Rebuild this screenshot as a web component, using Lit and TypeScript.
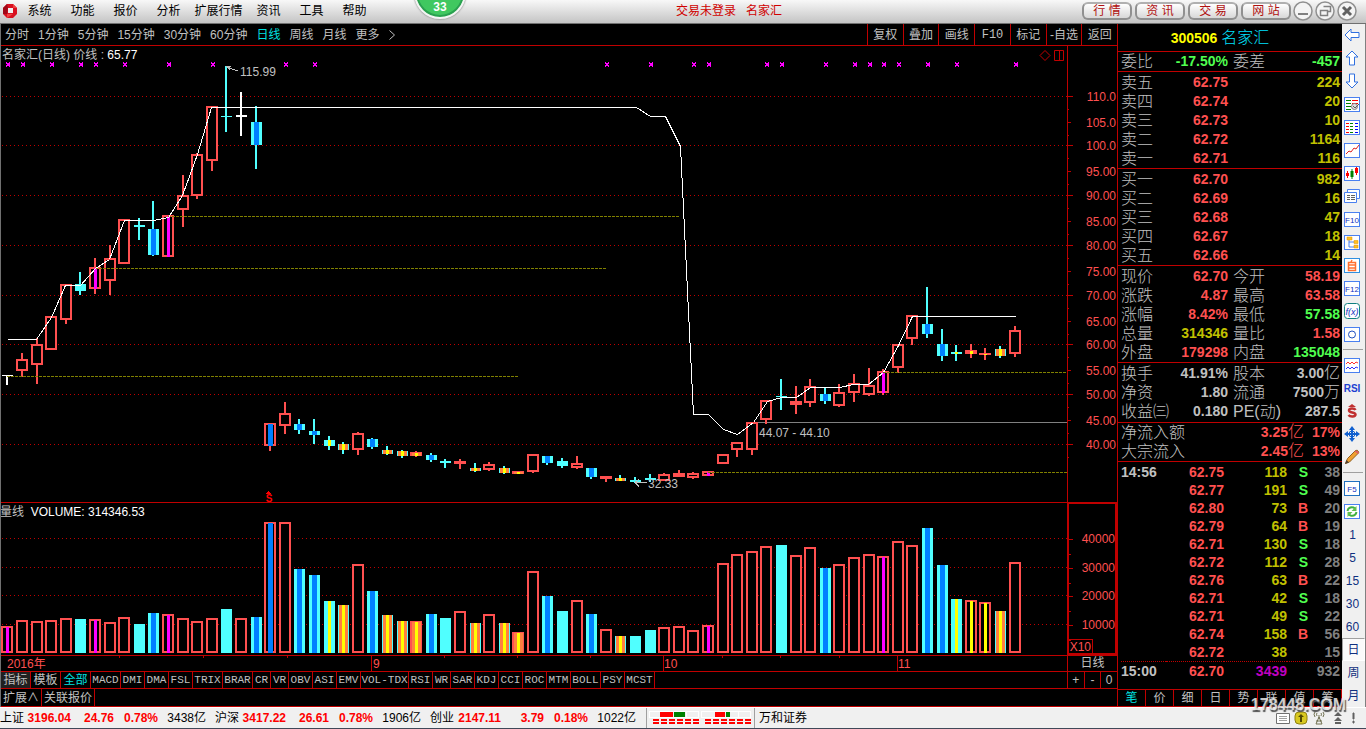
import { LitElement, html, svg, css, nothing } from "lit";
import { customElement, property, state } from "lit/decorators.js";
import { classMap } from "lit/directives/class-map.js";

/* ---------- shared look ---------- */

const base = css`
  * { box-sizing: border-box; }
  button {
    margin: 0; padding: 0; border: 0; background: none; color: inherit;
    font: inherit; white-space: nowrap; cursor: pointer;
  }
  svg { display: block; }
`;

const RED = "#ff5050";
const LINE = "#c00000";
const CYAN = "#50ffff";
const BLUE = "#0080ff";
const ORANGE = "#ff8040";
const YELLOW = "#ffff00";
const MAGENTA = "#ff00ff";
const OLIVE = "#808000";

/* ---------- chart data ----------
   kind: r up, c down, b down/blue core, y down/yellow core, o down/orange+yellow,
   m up/magenta core, R up/blue core, O up/orange+yellow, Y up/yellow core, w flat.
   Then high, body top, body bottom, low, top of the volume bar. */
type Bar = [string, number, number, number, number, number];
const BARS: Bar[] = [
  ["w", 375, 375, 376, 385, 626], ["r", 353, 359, 371, 377, 620], ["r", 338, 344, 365, 384, 621],
  ["r", 316, 316, 350, 350, 620], ["r", 284, 284, 320, 324, 618], ["c", 272, 284, 291, 295, 619],
  ["m", 258, 267, 289, 294, 619], ["r", 245, 258, 281, 295, 622], ["r", 219, 219, 264, 264, 617],
  ["c", 218, 225, 227, 240, 624], ["b", 201, 229, 255, 256, 613], ["m", 215, 215, 257, 257, 614],
  ["r", 175, 195, 210, 227, 618], ["r", 153, 154, 196, 199, 621], ["r", 106, 106, 161, 171, 618],
  ["c", 66, 116, 117, 132, 609], ["w", 92, 115, 117, 136, 618], ["b", 106, 122, 145, 169, 617],
  ["R", 423, 423, 446, 451, 522], ["r", 402, 413, 426, 434, 522], ["b", 419, 424, 430, 434, 569],
  ["b", 419, 431, 435, 444, 575], ["y", 436, 440, 446, 450, 601], ["o", 442, 444, 450, 454, 605],
  ["r", 432, 433, 450, 455, 564], ["b", 438, 439, 447, 449, 591], ["o", 446, 450, 454, 455, 615],
  ["o", 450, 451, 456, 458, 621], ["O", 451, 452, 456, 457, 621], ["b", 453, 455, 460, 462, 614],
  ["c", 459, 461, 463, 468, 618], ["r", 459, 461, 464, 469, 611], ["o", 463, 468, 471, 472, 623],
  ["r", 462, 464, 470, 471, 614], ["o", 466, 468, 473, 474, 623], ["O", 471, 471, 474, 474, 632],
  ["r", 454, 454, 472, 473, 571], ["b", 456, 456, 463, 465, 596], ["c", 458, 461, 466, 468, 611],
  ["r", 456, 463, 468, 469, 600], ["b", 468, 468, 477, 479, 614], ["r", 476, 476, 479, 482, 629],
  ["o", 475, 478, 481, 481, 636], ["c", 477, 480, 482, 483, 636], ["c", 474, 478, 480, 482, 630],
  ["r", 473, 474, 481, 481, 627], ["r", 470, 473, 477, 477, 626], ["r", 472, 473, 478, 479, 630],
  ["m", 471, 471, 476, 476, 625], ["r", 454, 454, 464, 464, 563], ["r", 442, 442, 450, 457, 554],
  ["r", 422, 422, 450, 455, 551], ["r", 400, 400, 420, 424, 546], ["c", 379, 396, 397, 410, 545],
  ["r", 386, 401, 405, 414, 555], ["r", 379, 386, 403, 407, 547], ["b", 388, 394, 401, 404, 568],
  ["r", 384, 392, 406, 407, 564], ["r", 374, 383, 393, 402, 557], ["r", 368, 385, 395, 396, 554],
  ["m", 369, 371, 393, 395, 556], ["r", 344, 344, 368, 373, 541], ["r", 315, 315, 339, 345, 545],
  ["b", 287, 324, 334, 338, 528], ["b", 329, 344, 356, 361, 565], ["y", 345, 352, 354, 361, 599],
  ["Y", 344, 350, 354, 358, 600], ["Y", 348, 353, 355, 360, 602], ["o", 346, 349, 356, 358, 611],
  ["r", 326, 330, 354, 357, 562],
];
const slot = (i: number) => Math.round(7.3 + 14.6 * i);

const PRICE_LINE: [number, number][] = [
  [7, 339], [36, 339], [51, 317], [65, 285], [80, 285], [95, 268], [109, 259], [124, 220], [153, 220],
  [168, 217], [182, 195], [197, 154], [211, 107], [636, 107], [650, 116], [665, 116], [680, 146],
  [693, 414], [708, 414], [723, 429], [737, 434], [753, 422], [767, 401], [781, 397], [796, 397],
  [810, 387], [839, 387], [853, 384], [868, 384], [883, 372], [898, 345], [912, 316], [1015, 316],
];
const MARKS: [number, boolean][] = [
  [0, true], [1, true], [3, true], [5, true], [6, false], [8, false], [11, true], [14, false],
  [19, false], [21, false], [41, false], [44, true], [47, false], [48, true], [52, true], [53, true],
  [56, false], [58, true], [59, true], [60, true], [61, false], [63, true], [65, false], [69, true],
];
const SUPPORTS: [number, number | string, number][] = [
  [168, 680, 216], [95, 607, 268], [7, 519, 376], [883, "100%", 372], [708, "100%", 472],
];
const PRICE_TICKS: [string, number][] = [
  ["110.0", 96], ["105.0", 122], ["100.0", 145], ["95.00", 171], ["90.00", 195], ["85.00", 221],
  ["80.00", 245], ["75.00", 271], ["70.00", 295], ["65.00", 321], ["60.00", 344], ["55.00", 370],
  ["50.00", 394], ["45.00", 420], ["40.00", 444],
];
const VOLUME_TICKS: [string, number][] = [["40000", 538], ["30000", 567], ["20000", 595], ["10000", 624]];

const PRICE_TOP = 46;
const VOLUME_TOP = 503;
const FLOOR = 653;

const box = (x: number, y: number, w: number, h: number, fill: string) =>
  svg`<rect x=${x} y=${y} width=${w} height=${Math.max(h, 1)} fill=${fill}></rect>`;

/* The body of a candle or of a volume bar, centred on x. */
function body(kind: string, x: number, top: number, bottom: number) {
  const h = bottom - top;
  if (kind === "w") return box(x - 5, top, 11, h, "#ffffff");
  if ("cbyo".includes(kind)) {
    return svg`${box(x - 5, top, 11, h, CYAN)}
      ${kind === "b" ? box(x - 2, top, 5, h, BLUE) : nothing}
      ${kind === "o" ? box(x - 4, top, 9, h, ORANGE) : nothing}
      ${kind === "o" || kind === "y" ? box(x - 1, top, 3, h, YELLOW) : nothing}`;
  }
  const frame = h <= 4
    ? box(x - 6, top, 12, h, RED)
    : svg`<rect x=${x - 5} y=${top + 1} width="10" height=${h - 2} fill="#000000" stroke=${RED} stroke-width="2"></rect>`;
  return svg`${frame}
    ${kind === "O" ? box(x - 4, top + 1, 9, h - 1, ORANGE) : nothing}
    ${kind === "O" || kind === "Y" ? box(x - 1, top + 1, 3, h - 1, YELLOW) : nothing}
    ${kind === "m" ? box(x - 1, top + 1, 3, h - 1, MAGENTA) : nothing}
    ${kind === "R" ? box(x - 2, top + 1, 5, h - 1, BLUE) : nothing}`;
}

@customElement("kline-chart")
class KlineChart extends LitElement {
  static styles = [base, css`
    :host { display: flex; flex-direction: column; flex: 1; min-height: 0; }
    .pane { display: flex; position: relative; min-height: 0; }
    .price { flex: 1; border-bottom: 1px solid #c00000; }
    .volume { height: 153px; border-bottom: 1px solid #c00000; }
    .plot { flex: 1; min-width: 0; height: 100%; shape-rendering: crispEdges; }
    .axis { width: 50px; height: 100%; border-left: 1px solid #c00000; shape-rendering: crispEdges; }
    .volume .axis { border: 2px solid #c00000; border-top-width: 1px; }
    text { font-size: 12px; fill: #c0c0c0; }
    .tick { fill: #ff5050; text-anchor: end; }
    .date { fill: #ff5050; }
    .money { fill: #ff0000; font-size: 10px; font-weight: 700; text-anchor: middle; }
    .legend { position: absolute; left: 2px; top: 0; line-height: 18px; color: #c0c0c0; white-space: pre; }
    .volume .legend { left: 0; color: #ffffff; }
    .legend b { font-weight: 400; color: #ffffff; }
    .legend i { font-style: normal; color: #c0c0c0; }
    .tools { position: absolute; right: 52px; top: 4px; }
    .time { display: flex; height: 16px; border-bottom: 1px solid #c00000; }
    .time .plot, .time .unit { height: 15px; }
    .unit { width: 50px; border-left: 1px solid #c00000; color: #c0c0c0; text-align: center; line-height: 15px; }
  `];

  private pricePlot() {
    const points = PRICE_LINE.map(([x, y]) => `${x + 0.5},${y + 0.5}`).join(" ");
    return html`<svg class="plot">
      <g transform="translate(0 ${-PRICE_TOP})">
        ${PRICE_TICKS.filter((_, i) => i % 2 === 0).map(([, y]) => svg`
          <line x1="2" x2="100%" y1=${y + 0.5} y2=${y + 0.5} stroke=${LINE} stroke-dasharray="1 3"></line>`)}
        <line x1="750" x2="100%" y1="422.5" y2="422.5" stroke="#808080"></line>
        ${BARS.map(([kind, high, top, bottom, low], i) => {
          const x = slot(i);
          const ink = kind === "w" ? "#ffffff" : "cbyo".includes(kind) ? CYAN : RED;
          return svg`${box(x - 1, high, 2, low - high, ink)}${body(kind, x, top, bottom)}`;
        })}
        ${SUPPORTS.map(([a, b, y]) => svg`
          <line x1=${a} x2=${b} y1=${y + 0.5} y2=${y + 0.5} stroke=${OLIVE} stroke-dasharray="3 1"></line>`)}
        <polyline points=${points} fill="none" stroke="#ffffff"></polyline>
        ${MARKS.map(([i, strong]) => {
          const x = slot(i) + 1;
          return svg`<path d="M${x - 2} 62.5L${x + 2} 66.5M${x + 2} 62.5L${x - 2} 66.5" stroke=${MAGENTA}></path>
            ${strong ? box(x - 1, 63, 3, 3, MAGENTA) : nothing}`;
        })}
        <path d="M226.5 66.5h4M226.5 66.5l4 4M228 67.5l10 3.5" stroke="#c0c0c0" fill="none"></path>
        <text x="240" y="76">115.99</text>
        <text x="759" y="437">44.07 - 44.10</text>
        <path d="M635 482.5h12M635 482.5l4-3M635 482.5l4 4" stroke="#c0c0c0" fill="none"></path>
        <text x="648" y="488">32.33</text>
        <path d="M266 493.5h5M267 492.5h3M268 491.5h1" stroke="#ff0000"></path>
        <text class="money" x="269" y="502">S</text>
      </g>
    </svg>`;
  }

  render() {
    return html`
      <div class="pane price">
        ${this.pricePlot()}
        <svg class="axis">
          ${PRICE_TICKS.map(([label, y], i) => svg`
            <line x1="0" x2=${i % 2 ? 3 : 5} y1=${y - PRICE_TOP + 0.5} y2=${y - PRICE_TOP + 0.5} stroke=${LINE}></line>
            <line x1="0" x2="1" y1=${y - PRICE_TOP + 13} y2=${y - PRICE_TOP + 13} stroke=${LINE}></line>
            <text class="tick" x="48" y=${y - PRICE_TOP + 5}>${label}</text>`)}
        </svg>
        <div class="legend">名家汇(日线) 价线 : <b>65.77</b></div>
        <svg class="tools" width="26" height="12">
          <path d="M6 .5l5 5-5 5-5-5z" fill="none" stroke=${LINE}></path>
          <path d="M15.5 .5h9v10h-9zM20.5 .5v10" fill="none" stroke=${LINE}></path>
        </svg>
      </div>
      <div class="pane volume">
        <svg class="plot">
          <g transform="translate(0 ${-VOLUME_TOP})">
            ${VOLUME_TICKS.map(([, y]) => svg`
              <line x1="2" x2="100%" y1=${y + 0.5} y2=${y + 0.5} stroke=${LINE} stroke-dasharray="1 3"></line>`)}
            ${BARS.map(([kind, , , , , top], i) =>
              body(i === 0 ? "m" : kind === "w" ? "r" : kind, slot(i), top, FLOOR))}
          </g>
        </svg>
        <svg class="axis">
          ${VOLUME_TICKS.map(([label, y]) => svg`
            <line x1="0" x2="4" y1=${y - VOLUME_TOP + 0.5} y2=${y - VOLUME_TOP + 0.5} stroke=${LINE}></line>
            <line x1="0" x2="2" y1=${y - VOLUME_TOP + 15} y2=${y - VOLUME_TOP + 15} stroke=${LINE}></line>
            <text class="tick" x="46" y=${y - VOLUME_TOP + 4}>${label}</text>`)}
          <path d="M0 135.5h23.5v16" fill="none" stroke=${LINE}></path>
          <text class="tick" x="22" y="147">X10</text>
        </svg>
        <div class="legend"><i>量线</i>  VOLUME: 314346.53</div>
      </div>
      <div class="time">
        <svg class="plot">
          ${[119, 203, 287, 444, 517, 590, 722, 780, 839].map((x) => box(x, 0, 1, 2, LINE))}
          ${[371, 663, 897].map((x) => box(x, 0, 1, 15, LINE))}
          <text class="date" x="7" y="12">2016年</text>
          <text class="date" x="373" y="12">9</text>
          <text class="date" x="664" y="12">10</text>
          <text class="date" x="898" y="12">11</text>
        </svg>
        <div class="unit">日线</div>
      </div>`;
  }
}

/* ---------- quote panel ---------- */

type Tone = "up" | "down" | "vol" | "plain";
type Cell = [string, string, Tone];
const GROUPS: { rows: [Cell, Cell][]; cls: string }[] = [
  { cls: "tight", rows: [[["委比", "-17.50%", "down"], ["委差", "-457", "down"]]] },
  { cls: "", rows: [
    [["卖五", "62.75", "up"], ["", "224", "vol"]], [["卖四", "62.74", "up"], ["", "20", "vol"]],
    [["卖三", "62.73", "up"], ["", "10", "vol"]], [["卖二", "62.72", "up"], ["", "1164", "vol"]],
    [["卖一", "62.71", "up"], ["", "116", "vol"]]] },
  { cls: "", rows: [
    [["买一", "62.70", "up"], ["", "982", "vol"]], [["买二", "62.69", "up"], ["", "16", "vol"]],
    [["买三", "62.68", "up"], ["", "47", "vol"]], [["买四", "62.67", "up"], ["", "18", "vol"]],
    [["买五", "62.66", "up"], ["", "14", "vol"]]] },
  { cls: "", rows: [
    [["现价", "62.70", "up"], ["今开", "58.19", "up"]], [["涨跌", "4.87", "up"], ["最高", "63.58", "up"]],
    [["涨幅", "8.42%", "up"], ["最低", "57.58", "down"]], [["总量", "314346", "vol"], ["量比", "1.58", "up"]],
    [["外盘", "179298", "up"], ["内盘", "135048", "down"]]] },
  { cls: "loose", rows: [
    [["换手", "41.91%", "plain"], ["股本", "3.00亿", "plain"]], [["净资", "1.80", "plain"], ["流通", "7500万", "plain"]],
    [["收益㈢", "0.180", "plain"], ["PE(动)", "287.5", "plain"]]] },
];
const FLOWS = [["净流入额", "3.25亿", "17%"], ["大宗流入", "2.45亿", "13%"]];
const TRADES: [string, string, string, string, string][] = [
  ["14:56", "62.75", "118", "S", "38"], ["", "62.77", "191", "S", "49"], ["", "62.80", "73", "B", "20"],
  ["", "62.79", "64", "B", "19"], ["", "62.71", "130", "S", "18"], ["", "62.72", "112", "S", "28"],
  ["", "62.76", "63", "B", "22"], ["", "62.71", "42", "S", "18"], ["", "62.71", "49", "S", "22"],
  ["", "62.74", "158", "B", "56"], ["", "62.72", "38", "", "15"], ["15:00", "62.70", "3439", "", "932"],
];

const amount = (v: string) => {
  const m = /^(.*?)([亿万])$/.exec(v);
  return m ? html`${m[1]}<span class="suffix">${m[2]}</span>` : v;
};

@customElement("quote-panel")
class QuotePanel extends LitElement {
  @state() private tab = 0;

  static styles = [base, css`
    :host { display: flex; flex-direction: column; width: 225px; border-left: 1px solid #c00000; color: #c0c0c0; }
    .head { height: 28px; line-height: 27px; text-align: center; border-bottom: 1px solid #c00000; padding-right: 20px; }
    .code { color: #ffff00; font-size: 14px; font-weight: 700; margin-right: 4px; }
    .name { color: #00e0ff; font-size: 16px; font-weight: 300; }
    .group { border-bottom: 1px solid #c00000; padding: 1px 2px 0 3px; }
    .tight { padding-top: 0; }
    .loose { padding-bottom: 1px; }
    table { width: 100%; border-collapse: collapse; table-layout: fixed; }
    th, td { padding: 0; height: 19px; line-height: 19px; white-space: nowrap; vertical-align: middle; }
    th { font-size: 16px; font-weight: 300; text-align: left; }
    td { font-size: 14px; font-weight: 700; text-align: right; }
    .label { width: 50px; }
    .value { width: 57px; }
    .second { width: 48px; }
    .gap { width: 5px; }
    .flow { width: 85px; }
    .percent { width: 36px; }
    .suffix { font-size: 16px; font-weight: 300; line-height: 1; }
    .up { color: #ff5050; }
    .down { color: #50ff50; }
    .vol { color: #c0c000; }
    .dim { color: #808080; }
    .big { color: #c000c0; }
    .trades { flex: 1; padding: 1px 2px 0 3px; }
    .trades td { height: 18px; line-height: 18px; }
    .trades .when { text-align: left; width: 45px; }
    .trades .cost { width: 58px; }
    .trades .lots { width: 63px; }
    .trades .side { width: 21px; }
    .trades .last td { border-top: 1px dotted #c00000; }
    .tabs { display: flex; height: 18px; border: 1px solid #c00000; border-left: 0; }
    .tabs button { flex: 1; font-size: 12px; border-left: 1px solid #c00000; }
    .tabs button:first-child { border-left: 0; }
    .tabs .on { color: #00e0e0; }
  `];

  render() {
    return html`
      <div class="head"><span class="code">300506</span><span class="name">名家汇</span></div>
      ${GROUPS.map((g) => html`<div class="group ${g.cls}"><table>
        <colgroup><col class="label"><col class="value"><col class="gap"><col class="second"><col></colgroup>
        ${g.rows.map(([a, b]) => html`<tr>
          <th scope="row">${a[0]}</th><td class=${a[2]}>${a[1]}</td><td></td>
          <th>${b[0]}</th><td class=${b[2]}>${amount(b[1])}</td></tr>`)}
      </table></div>`)}
      <div class="group tight"><table>
        <colgroup><col><col class="flow"><col class="percent"></colgroup>
        ${FLOWS.map(([n, v, p]) => html`<tr><th scope="row">${n}</th><td class="up">${amount(v)}</td><td class="up">${p}</td></tr>`)}
      </table></div>
      <div class="trades"><table>
        ${TRADES.map(([t, p, v, s, n], i) => html`<tr class=${classMap({ last: i === TRADES.length - 1 })}>
          <td class="when">${t}</td><td class="cost up">${p}</td>
          <td class="lots ${v === "3439" ? "big" : "vol"}">${v}</td>
          <td class="side ${s === "B" ? "up" : "down"}">${s}</td><td class="dim">${n}</td></tr>`)}
      </table></div>
      <div class="tabs">${[..."笔价细日势联值筹"].map((t, i) => html`
        <button class=${classMap({ on: i === this.tab })} @click=${() => (this.tab = i)}>${t}</button>`)}</div>`;
  }
}

/* ---------- tool rail ---------- */

const frame = (inner: unknown, ink = "#4a80f0", w = 15, h = 14) =>
  svg`<rect x=".5" y="1.5" width=${w} height=${h} fill="#ffffff" stroke=${ink}></rect>${inner}`;
const rows = (x: number, ink: string, n = 4, w = 3) =>
  Array.from({ length: n }, (_, i) => svg`<rect x=${x} y=${4 + i * 3} width=${w} height="1" fill=${ink}></rect>`);
const glyph = (t: string) => svg`<text x="8" y="12">${t}</text>`;
const arrow = svg`<path d="M1 8l6-6v3.5h8v5H7V14z" fill="#ffffff" stroke="#3070e0"></path>`;

const RAIL: Record<string, unknown> = {
  "后退": arrow,
  "上移": svg`<g transform="rotate(90 8 8)">${arrow}</g>`,
  "下移": svg`<g transform="rotate(-90 8 8)">${arrow}</g>`,
  "报价表": frame(svg`${rows(2, "#008000", 4, 5)}${rows(8, "#ff0000", 2, 6)}<circle cx="10.5" cy="10.5" r="3" fill="#e0e0e0" stroke="#808080"></circle><path d="M9 10l2 2 4-4" stroke="#606060" fill="none"></path>`),
  "多列": frame(svg`${rows(2, "#ff0000")}${rows(6, "#008000")}${rows(11, "#0000ff")}`),
  "走势": frame(svg`<path d="M2 12l3-3 2 1 3-4 2 1 3-4" stroke="#e02020" fill="none"></path>`),
  "K线": frame(svg`<path d="M3.5 6v7M12.5 2v8" stroke="#ff0000"></path><path d="M8 4v10" stroke="#008000"></path><path d="M2 8h3v3H2zM11 3h3v5h-3z" fill="#ff0000"></path><path d="M6.5 6h3v6h-3z" fill="#008000"></path>`),
  "资料": svg`<path d="M3.5 1.5h12v9h-12z" fill="#ffffff" stroke="#4a80f0"></path><path d="M.5 4.5h12v10H.5z" fill="#ffffff" stroke="#4a80f0"></path><path d="M3 7.5h3m1 0h4M3 9.5h3m1 0h4M3 11.5h3m1 0h4" stroke="#606060"></path>`,
  "F10": frame(glyph("F10")),
  "板块树": frame(svg`<path d="M5 5v8h5M5 8h5" stroke="#4a80f0" fill="none"></path><path d="M3 3h5v3H3zM10 6.5h4v3h-4zM10 11h4v3h-4z" fill="#ffc020" stroke="#e09000" stroke-width=".5"></path>`),
  "自选": frame(svg`<path d="M4.5 5.5h7v8h-7zM4.500 8h7M4.500 11h7M8 3l-1 2" stroke="#ff7030" stroke-width="1.5" fill="none"></path>`, "#3090e0"),
  "F12": frame(glyph("F12")),
  "公式": svg`<rect x=".5" y=".5" width="15" height="15" rx="3" fill="#ffffff" stroke="#108080"></rect><text class="formula" x="8" y="12">f(x)</text>`,
  "区间": frame(svg`<circle cx="8" cy="8.5" r="3.5" fill="none" stroke="#2050c0"></circle>`),
  "-1": null,
  "叠加": frame(svg`<path d="M2 7l2-2 2 2 2-2 2 2 2-2 2 1" stroke="#ff3030" fill="none"></path><path d="M2 12l2-2 2 2 2-2 2 2 2-2 2 1" stroke="#3030ff" fill="none"></path>`),
  "RSI": svg`<text class="rsi" x="8" y="12">RSI</text>`,
  "资金": svg`<path d="M8 1l4 3H4z" fill="#c03030"></path><path d="M11.500 7c-1-2-6.500-2-6.500.5 0 2.500 6.500 1.500 6.500 4 0 2.500-5.500 2.500-7 .5" stroke="#c03030" stroke-width="2.500" fill="none"></path>`,
  "平移": svg`<path d="M8 0l3 4H9v3h3V5l4 3-4 3V9H9v3h2l-3 4-3-4h2V9H4v2L0 8l4-3v2h3V4H5z" fill="#1060d0"></path><circle cx="8" cy="8" r="3" fill="none" stroke="#1060d0"></circle>`,
  "画笔": svg`<path d="M1.5 14.5l2-5 8-8q2-1 3 1 .8 1-1 2.5l-8 8z" fill="#f0a030" stroke="#906020"></path><path d="M1 15l1.5-4 2.5 2.5z" fill="#504030"></path><path d="M11 2q3-1 4 2l-1 1-4-3z" fill="#e06060"></path>`,
  "-2": null,
  "F5": frame(glyph("F5"), "#2070c0"),
  "刷新": frame(svg`<path d="M3.5 8q1-4.5 6-3.5l2 1.5M12.5 9q-1 4.5-6 3.5l-2-1.5" stroke="#40b040" stroke-width="2" fill="none"></path><path d="M12.5 3v5h-5zM3.5 14v-5h5z" fill="#60c050"></path>`),
};

@customElement("tool-rail")
class ToolRail extends LitElement {
  @state() private period = "日";

  static styles = [base, css`
    :host { display: flex; flex-direction: column; width: 24px; background: #f0f0f0; border-right: 1px solid #808080; }
    button { display: flex; height: 23px; align-items: center; justify-content: center; padding-right: 2px; color: #103080; font-size: 12px; }
    svg { width: 17px; height: 17px; overflow: visible; }
    text { font-size: 8px; fill: #1030c0; text-anchor: middle; }
    .formula { font-size: 9px; font-style: italic; }
    .rsi { font-size: 10px; font-weight: 700; fill: #2040d0; }
    hr { width: 20px; height: 8px; margin: 0 0 0 1px; border: 0; background: linear-gradient(#a0a0a0, #a0a0a0) 0 3px / 100% 1px no-repeat; }
    .word { font-size: 12px; padding: 0; }
    .on { background: #fafafa; border: 1px solid #a0a0a0; border-right-color: #ffffff; border-bottom-color: #ffffff; }
  `];

  render() {
    return html`
      ${Object.entries(RAIL).map(([name, art]) => art === null ? html`<hr>` : html`
        <button aria-label=${name}><svg viewBox="0 0 17 17">${art}</svg></button>`)}
      ${["1", "5", "15", "30", "60"].map((p) => html`<button @click=${() => (this.period = p)}>${p}</button>`)}
      ${["日", "周", "月"].map((p) => html`
        <button class="word ${p === this.period ? "on" : ""}" @click=${() => (this.period = p)}>${p}</button>`)}`;
  }
}

/* ---------- status bar ---------- */

const INDICES = [
  ["上证", "3196.04", "24.76", "0.78%", "3438亿"],
  ["沪深", "3417.22", "26.61", "0.78%", "1906亿"],
  ["创业", "2147.11", "3.79", "0.18%", "1022亿"],
];

@customElement("status-bar")
class StatusBar extends LitElement {
  static styles = [base, css`
    :host { display: flex; align-items: center; height: 22px; background: #f0f0f0; border-top: 1px solid #ffffff; border-bottom: 1px solid #404858; color: #000000; line-height: 20px; }
    .index { display: grid; grid-template-columns: 24px 47px 43px 44px 48px; width: 215px; text-align: right; white-space: nowrap; }
    .index b { color: #ff0000; }
    .meters { display: flex; gap: 2px; padding: 0 3px 0 2px; margin-left: 1px; border-left: 1px solid #a0a0a0; border-right: 1px solid #a0a0a0; }
    .broker { padding-left: 4px; flex: 1; }
    .tray { display: flex; gap: 4px; padding-right: 8px; }
  `];

  private meter(red: [number, number], green: [number, number]) {
    return html`<svg width="50" height="20" shape-rendering="crispEdges">
      <rect x=".5" y="3.5" width="49" height="6" fill="#f0f0f0" stroke="#ffffff"></rect>
      ${box(red[0], 4, red[1], 5, "#ff0000")}${box(green[0], 4, green[1], 5, "#008000")}
      ${box(37, 4, 1, 5, "#ffffff")}
      <path d="M4 12h46M4 15h46" stroke="#ff0000" stroke-width="2" stroke-dasharray="6 2"></path>
    </svg>`;
  }

  render() {
    return html`
      ${INDICES.map(([n, v, d, p, a]) => html`<div class="index">
        <span>${n}</span><b>${v}</b><b>${d}</b><b>${p}</b><span>${a}</span></div>`)}
      <div class="meters">${this.meter([11, 13], [25, 11])}${this.meter([14, 10], [25, 4])}</div>
      <div class="broker">万和证券</div>
      <div class="tray">
        <svg width="14" height="14"><path d="M.5 2.5h13v10H.5z" fill="#ffffff" stroke="#707070"></path><path d="M3 5.5h8M3 7.5h8M3 9.5h8" stroke="#a0a0a0"></path></svg>
        <svg width="14" height="14"><rect x="1" y="1" width="12" height="12" rx="4" fill="#d8c820" stroke="#908010"></rect><path d="M7 3l3 3H8v5H6V6H4z" fill="#504800"></path></svg>
        <svg width="14" height="14"><path d="M7 4v4M7 6l-3 7h6zM4 10h6M3 1q-2 2 0 5M11 1q2 2 0 5M5 2q-1 1 0 3M9 2q1 1 0 3" fill="none" stroke="#707050"></path></svg>
        <svg width="14" height="14"><path d="M8 1l4 4H4zM8 6l4 4H4zM5 11h6v2H5z" fill="#606060"></path></svg>
        <svg width="10" height="14"><path d="M5 2h1v6H5zM5 10h1v2H5z" stroke="#606060" fill="#606060"></path></svg>
      </div>`;
  }
}

/* ---------- application frame ---------- */

const PERIODS = ["分时", "1分钟", "5分钟", "15分钟", "30分钟", "60分钟", "日线", "周线", "月线", "更多"];
const MENUS = ["系统", "功能", "报价", "分析", "扩展行情", "资讯", "工具", "帮助"];
const ACTIONS = ["复权", "叠加", "画线", "F10", "标记", "-自选", "返回"];
const INDICATORS = ["MACD", "DMI", "DMA", "FSL", "TRIX", "BRAR", "CR", "VR", "OBV", "ASI", "EMV", "VOL-TDX",
  "RSI", "WR", "SAR", "KDJ", "CCI", "ROC", "MTM", "BOLL", "PSY", "MCST"];

@customElement("app-root")
class AppRoot extends LitElement {
  @property() period = "日线";

  static styles = [base, css`
    :host {
      display: flex; flex-direction: column; position: relative; height: 100vh; overflow: hidden;
      background: #000000; font: 12px/1 "Liberation Sans", "Noto Sans CJK SC", sans-serif;
    }
    .top { display: flex; align-items: center; height: 24px; padding: 0 9px 1px 2px; background: linear-gradient(#f8f8f8, #c4c4c4); border-bottom: 1px solid #707070; }
    .menu { display: flex; }
    .menu button { width: 43px; height: 22px; color: #000000; }
    .menu .wide { width: 57px; }
    .title { flex: 1; text-align: center; color: #d00000; white-space: pre; }
    .links { display: flex; gap: 3px; margin-right: 2px; }
    .links button { width: 50px; height: 18px; border: 2px solid #909090; border-top-color: #b0b0b0; border-radius: 6px; background: linear-gradient(#ffffff, #d8d8d8); color: #b01010; line-height: 14px; }
    .window { display: flex; gap: 2px; }
    .badge {
      position: absolute; left: 414px; top: -33px; width: 52px; height: 52px; border-radius: 50%;
      border: 2px solid #f4f4f4; background: #40c860; box-shadow: inset 0 0 0 2px #2aa050, 0 0 2px #606060;
      color: #ffffff; font-weight: 700; font-size: 12px; text-align: center; line-height: 76px;
    }
    .main { display: flex; flex: 1; min-height: 0; position: relative; }
    .main::before { content: ""; position: absolute; left: 0; top: 0; bottom: 0; width: 1px; background: #707070; z-index: 1; }
    .work { display: flex; flex-direction: column; flex: 1; min-width: 0; }
    .bar { display: flex; height: 22px; border-bottom: 1px solid #c00000; color: #c0c0c0; }
    .periods { display: flex; gap: 9px; flex: 1; padding-left: 5px; align-items: center; }
    .periods .on { color: #00e0e0; }
    .actions { display: flex; width: 250px; }
    .actions button { flex: 1; border-left: 1px solid #c00000; }
    .actions .latin { font-family: "Liberation Mono", monospace; }
    .strip { display: flex; height: 17px; border-bottom: 1px solid #c00000; color: #c0c0c0; padding-left: 1px; }
    .strip.second { height: 18px; }
    .strip button { border-right: 1px solid #c00000; padding: 0 2px; }
    .strip .tab { width: 30px; }
    .strip .tab:first-child { background: #202020; }
    .strip .on { color: #00e0e0; }
    .strip .code { font: 11px/1 "Liberation Mono", monospace; padding: 0; }
    .c2 { width: 18px; } .c3 { width: 24px; } .c4 { width: 30px; } .c7 { width: 48px; }
    .zoom { display: flex; margin-left: auto; width: 50px; border-left: 1px solid #c00000; }
    .zoom button { flex: 1; }
    .zoom button:last-child { border-right: 0; }
    .mark {
      position: absolute; right: 20px; bottom: 14px; font-size: 16px; line-height: 20px; font-weight: 700;
      color: rgba(235, 235, 235, 0.85); text-shadow: 1px 2px 1px #505050; pointer-events: none;
    }
  `];

  render() {
    return html`
      <header class="top">
        <svg width="16" height="16" viewBox="0 0 16 16">
          <path d="M5 1h6l4 4v6l-4 4H5l-4-4V5z" fill="#d81020"></path>
          <path d="M1 5l4-4 1 4-1 6H1z" fill="#a00818"></path>
          <path d="M6 5h5v5H6z" fill="#f0f0f0"></path>
          <path d="M11 1l4 4h-4zM5 15v-4h6z" fill="#f04040"></path>
        </svg>
        <nav class="menu">${MENUS.map((m) => html`<button class=${classMap({ wide: m.length > 2 })}>${m}</button>`)}</nav>
        <div class="title">交易未登录   名家汇</div>
        <div class="links">${["行 情", "资 讯", "交 易", "网 站"].map((t) => html`<button>${t}</button>`)}</div>
        <div class="window">${[
          svg`<path d="M5 13h10" stroke="#808080" stroke-width="2"></path>`,
          svg`<path d="M8.5 5.5h7v5h-3M5.5 9.5h7v5h-7z" stroke="#808080" stroke-width="1.5" fill="none"></path>`,
          svg`<path d="M6 6l8 8M14 6l-8 8" stroke="#606060" stroke-width="3"></path>`,
        ].map((art, i) => html`<button aria-label=${["最小化", "还原", "关闭"][i]}><svg width="20" height="20">
          <circle cx="10" cy="10" r="9" fill="#f4f4f4" stroke="#909090" stroke-width="1.5"></circle>${art}</svg></button>`)}
        </div>
      </header>
      <div class="badge">33</div>
      <div class="main">
        <div class="work">
          <div class="bar">
            <div class="periods">
              ${PERIODS.map((p) => html`<button class=${classMap({ on: p === this.period })} @click=${() => (this.period = p)}>${p}</button>`)}
              <svg width="6" height="10"><path d="M.5 .5l5 4.5-5 4.5" fill="none" stroke="#c0c0c0"></path></svg>
            </div>
            <div class="actions">${ACTIONS.map((a) => html`<button class=${classMap({ latin: a === "F10" })}>${a}</button>`)}</div>
          </div>
          <kline-chart></kline-chart>
          <div class="strip">
            <button class="tab">指标</button><button class="tab">模板</button><button class="tab on">全部</button>
            ${INDICATORS.map((n) => html`<button class="code c${n.length}">${n}</button>`)}
            <div class="zoom"><button>+</button><button>-</button><button>0</button></div>
          </div>
          <div class="strip second"><button>扩展∧</button><button>关联报价</button></div>
        </div>
        <quote-panel></quote-panel>
        <tool-rail></tool-rail>
      </div>
      <status-bar></status-bar>
      <div class="mark">178448.COM</div>`;
  }
}
